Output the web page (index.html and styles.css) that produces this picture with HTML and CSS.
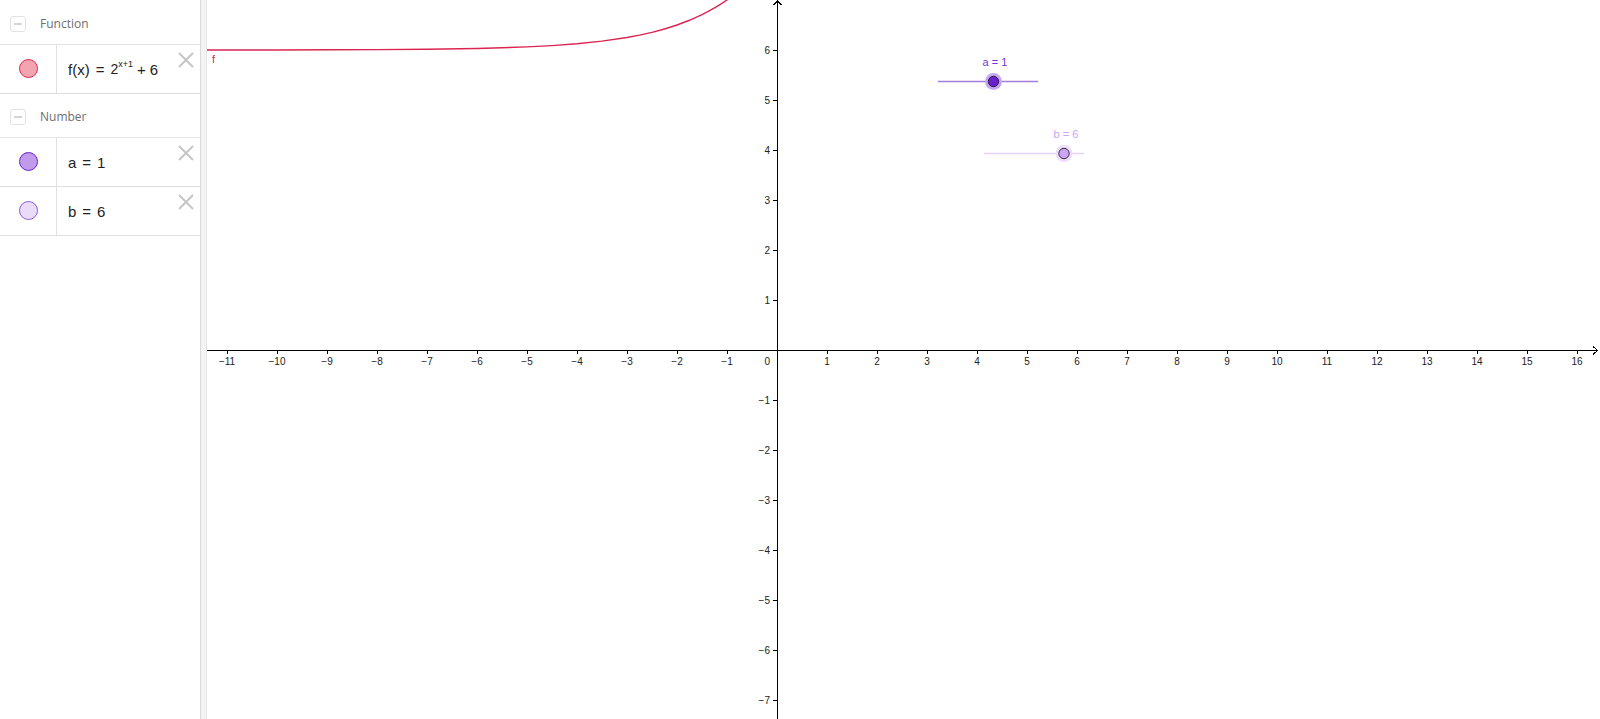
FILE: index.html
```html
<!DOCTYPE html>
<html lang="en">
<head>
<meta charset="utf-8">
<title>Graphing</title>
<link rel="stylesheet" href="styles.css">
</head>
<body>
<div class="app">
  <aside class="algebra">
    <div class="group-header">
      <span class="toggle"><span class="toggle-bar"></span></span>
      <span class="group-title">Function</span>
    </div>
    <div class="item">
      <div class="marble-cell"><span class="marble marble-f"></span></div>
      <div class="formula">f(x)<span class="eq">=</span><span class="base">2</span><sup class="sup">x+1</sup><span class="op">+</span>6</div>
      <svg class="delete" width="16" height="16" viewBox="0 0 16 16"><path d="M1 1L15 15M15 1L1 15"/></svg>
    </div>
    <div class="group-header">
      <span class="toggle"><span class="toggle-bar"></span></span>
      <span class="group-title">Number</span>
    </div>
    <div class="item">
      <div class="marble-cell"><span class="marble marble-a"></span></div>
      <div class="formula">a<span class="eq">=</span>1</div>
      <svg class="delete" width="16" height="16" viewBox="0 0 16 16"><path d="M1 1L15 15M15 1L1 15"/></svg>
    </div>
    <div class="item">
      <div class="marble-cell"><span class="marble marble-b"></span></div>
      <div class="formula">b<span class="eq">=</span>6</div>
      <svg class="delete" width="16" height="16" viewBox="0 0 16 16"><path d="M1 1L15 15M15 1L1 15"/></svg>
    </div>
  </aside>
  <div class="divider"></div>
  <main class="graphics">
    <svg class="canvas" width="1393" height="719" viewBox="207 0 1393 719">
      <path class="axis" d="M207 350.5H1597 M777.5 0V719"/>
      <path class="axis" d="M1593 346.5L1597.5 350.5L1593 354.5 M773.5 5L777.5 0.8L781.5 5"/>
      <path class="axis" d="M227.5 350v4M277.5 350v4M327.5 350v4M377.5 350v4M427.5 350v4M477.5 350v4M527.5 350v4M577.5 350v4M627.5 350v4M677.5 350v4M727.5 350v4M827.5 350v4M877.5 350v4M927.5 350v4M977.5 350v4M1027.5 350v4M1077.5 350v4M1127.5 350v4M1177.5 350v4M1227.5 350v4M1277.5 350v4M1327.5 350v4M1377.5 350v4M1427.5 350v4M1477.5 350v4M1527.5 350v4M1577.5 350v4"/>
      <path class="axis" d="M773 50.5h4M773 100.5h4M773 150.5h4M773 200.5h4M773 250.5h4M773 300.5h4M773 400.5h4M773 450.5h4M773 500.5h4M773 550.5h4M773 600.5h4M773 650.5h4M773 700.5h4"/>
      <g class="xlabels">
        <text x="227" y="365">−11</text><text x="277" y="365">−10</text><text x="327" y="365">−9</text>
        <text x="377" y="365">−8</text><text x="427" y="365">−7</text><text x="477" y="365">−6</text>
        <text x="527" y="365">−5</text><text x="577" y="365">−4</text><text x="627" y="365">−3</text>
        <text x="677" y="365">−2</text><text x="727" y="365">−1</text>
        <text x="827" y="365">1</text><text x="877" y="365">2</text><text x="927" y="365">3</text>
        <text x="977" y="365">4</text><text x="1027" y="365">5</text><text x="1077" y="365">6</text>
        <text x="1127" y="365">7</text><text x="1177" y="365">8</text><text x="1227" y="365">9</text>
        <text x="1277" y="365">10</text><text x="1327" y="365">11</text><text x="1377" y="365">12</text>
        <text x="1427" y="365">13</text><text x="1477" y="365">14</text><text x="1527" y="365">15</text>
        <text x="1577" y="365">16</text>
      </g>
      <g class="ylabels">
        <text x="770" y="365">0</text>
        <text x="770" y="54">6</text><text x="770" y="104">5</text><text x="770" y="154">4</text>
        <text x="770" y="204">3</text><text x="770" y="254">2</text><text x="770" y="304">1</text>
        <text x="770" y="404">−1</text><text x="770" y="454">−2</text><text x="770" y="504">−3</text>
        <text x="770" y="554">−4</text><text x="770" y="604">−5</text><text x="770" y="654">−6</text>
        <text x="770" y="704">−7</text>
      </g>
      <polyline class="curve" points="207,49.96 277,49.93 327,49.8 377,49.61 427,49.22 477,48.44 502,47.79 527,46.88 552,45.58 577,43.75 602,41.16 627,37.5 639.5,35.13 652,32.32 664.5,28.98 677,25 689.5,20.27 702,14.64 708.25,11.47 714.5,7.96 720.75,4.14 727,0 732,-3.59"/>
      <text class="flabel" x="212" y="63">f</text>
      <line class="slider-a-line" x1="938" y1="81.5" x2="1038" y2="81.5"/>
      <circle class="halo-a" cx="993.5" cy="81.5" r="8.5"/>
      <circle class="point-a" cx="993.5" cy="81.5" r="5.2"/>
      <text class="label-a" x="995" y="66">a = 1</text>
      <line class="slider-b-line" x1="984" y1="153.5" x2="1084" y2="153.5"/>
      <circle class="halo-b" cx="1064" cy="153.5" r="8.5"/>
      <circle class="point-b" cx="1064" cy="153.5" r="5.2"/>
      <text class="label-b" x="1066" y="138">b = 6</text>
    </svg>
  </main>
</div>
</body>
</html>
```
FILE: styles.css
```css
html, body {
  margin: 0;
  padding: 0;
  background: #ffffff;
  overflow: hidden;
}

.app {
  display: flex;
  width: 1600px;
  height: 719px;
  font-family: "Liberation Sans", Arial, sans-serif;
}

.algebra {
  width: 200px;
  flex: 0 0 200px;
  display: flex;
  flex-direction: column;
  background: #ffffff;
  padding-top: 1px;
  box-sizing: border-box;
}

.group-header {
  height: 44px;
  display: flex;
  align-items: center;
  padding: 2px 0 0 10px;
  box-sizing: border-box;
  border-bottom: 1px solid #e4e4e4;
  gap: 14px;
}

.toggle {
  width: 14px;
  height: 14px;
  border: 1px solid #e2e2e2;
  border-radius: 3px;
  display: flex;
  align-items: center;
  justify-content: center;
}

.toggle-bar {
  width: 8px;
  height: 2px;
  background: #d4d4d4;
}

.group-title {
  font-family: "Open Sans", "Liberation Sans", sans-serif;
  font-size: 12px;
  color: #6e6e6e;
}

.item {
  height: 49px;
  box-sizing: border-box;
  display: flex;
  border-bottom: 1px solid #e0e0e0;
}

.marble-cell {
  width: 56px;
  flex: 0 0 56px;
  border-right: 1px solid #e0e0e0;
  display: flex;
  align-items: center;
  justify-content: center;
}

.marble {
  width: 17px;
  height: 17px;
  border-radius: 50%;
  border: 1.5px solid;
  margin-top: -2px;
}

.marble-f {
  background: #f2a4b0;
  border-color: #df2750;
}

.marble-a {
  background: #c19be9;
  border-color: #6b22cf;
}

.marble-b {
  background: #ebdbfb;
  border-color: #8f5ad8;
}

.formula {
  flex: 1;
  display: flex;
  align-items: center;
  padding-left: 11px;
  font-size: 15px;
  color: #222222;
  white-space: nowrap;
}

.eq {
  margin: 0 6px;
}

.op {
  margin: 0 4px;
}

.base {
  font-size: 14px;
}

.sup {
  font-size: 9px;
  position: relative;
  top: -5px;
  vertical-align: baseline;
}

.delete {
  align-self: flex-start;
  margin: 7px 6px 0 0;
  flex: 0 0 16px;
}

.delete path {
  stroke: #c4c4c4;
  stroke-width: 1.8;
  fill: none;
}

.divider {
  width: 7px;
  flex: 0 0 7px;
  box-sizing: border-box;
  background: #f4f4f4;
  border-left: 1px solid #dadada;
  border-right: 1px solid #e4e4e4;
}

.graphics {
  flex: 1;
  height: 719px;
  overflow: hidden;
}

.canvas {
  display: block;
}

.axis {
  stroke: #000000;
  stroke-width: 1;
  fill: none;
  shape-rendering: crispEdges;
}

.xlabels text {
  font-family: "Liberation Sans", Arial, sans-serif;
  font-size: 10px;
  fill: #222222;
  text-anchor: middle;
}

.ylabels text {
  font-family: "Liberation Sans", Arial, sans-serif;
  font-size: 10px;
  fill: #222222;
  text-anchor: end;
}

.curve {
  fill: none;
  stroke: #dc2451;
  stroke-width: 1.4;
}

.flabel {
  font-family: "Liberation Sans", Arial, sans-serif;
  font-size: 11px;
  fill: #dc2451;
}

.slider-a-line {
  stroke: #a57fe0;
  stroke-width: 1.3;
}

.halo-a {
  fill: #c7a6f1;
}

.point-a {
  fill: #6a1fd0;
  stroke: #2a1a40;
  stroke-width: 1;
}

.label-a {
  font-family: "Liberation Sans", Arial, sans-serif;
  font-size: 11px;
  fill: #7436d6;
  text-anchor: middle;
}

.slider-b-line {
  stroke: #e4d2f8;
  stroke-width: 1.3;
}

.halo-b {
  fill: #ecdcfb;
}

.point-b {
  fill: #cba4f5;
  stroke: #333333;
  stroke-width: 1;
}

.label-b {
  font-family: "Liberation Sans", Arial, sans-serif;
  font-size: 11px;
  fill: #cba4f3;
  text-anchor: middle;
}
```
